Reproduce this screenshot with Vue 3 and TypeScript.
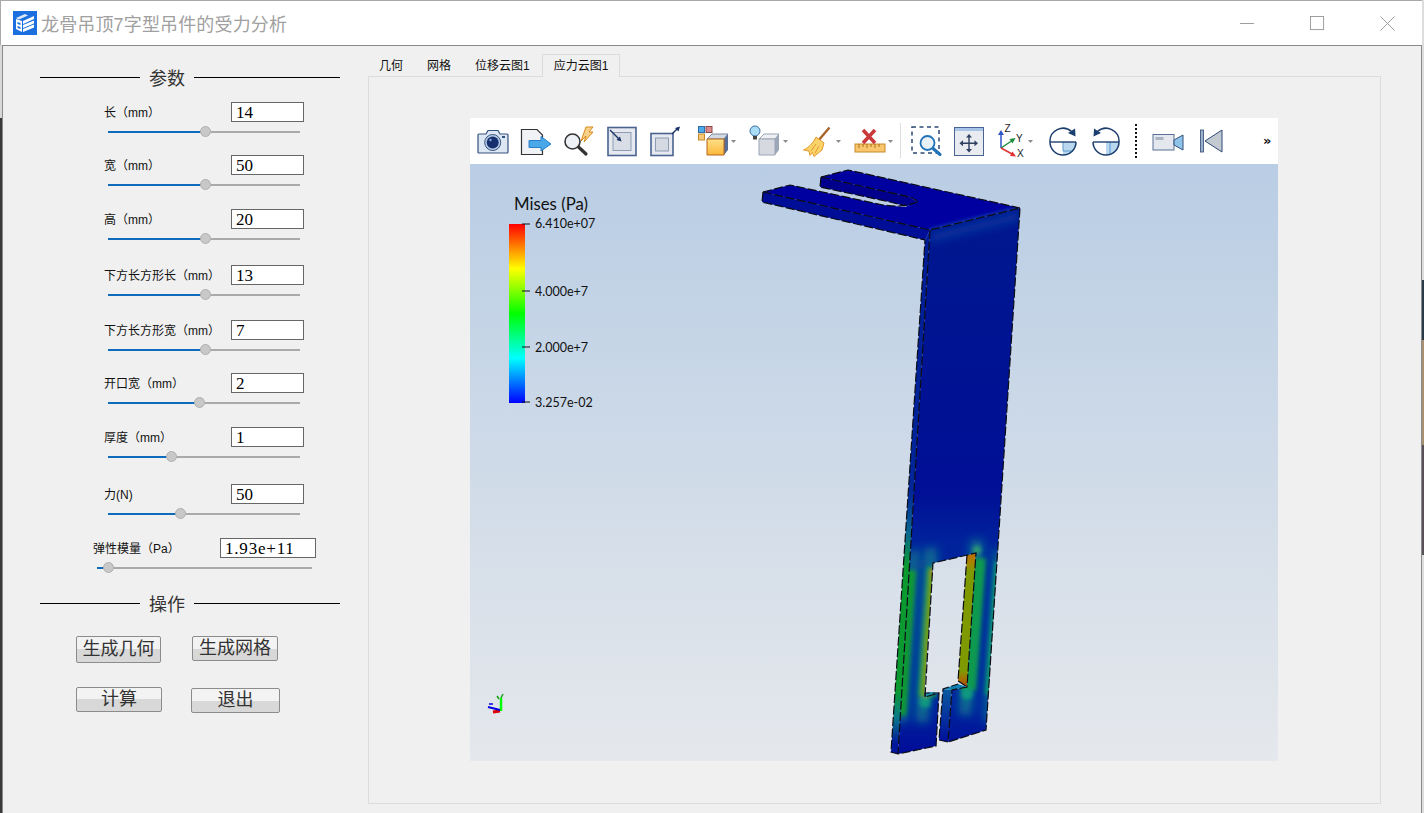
<template>
  <div class="window">
    <header class="titlebar">
      <svg class="logo" viewBox="0 0 24 24">
        <rect width="24" height="24" fill="#1b6fdf" />
        <path d="M3 7 L12 3 L15 4.5 L6 8.5 Z" fill="#dbe9fb" />
        <path d="M3 8 L9 10 L9 21 L3 18 Z" fill="#fff" />
        <path d="M10 10 L21 5 L21 8 L10 13 Z M10 14 L21 9.5 L21 12.5 L10 17 Z M10 18 L21 13.5 L21 16.5 L10 21 Z" fill="#fff" />
        <path d="M4.5 11 L7.5 12 L7.5 14 L4.5 13 Z M4.5 15 L7.5 16 L7.5 18 L4.5 17 Z" fill="#1b6fdf" />
      </svg>
      <span class="title">龙骨吊顶7字型吊件的受力分析</span>
      <div class="controls">
        <svg viewBox="0 0 16 16"><path d="M0 8H15" /></svg>
        <svg viewBox="0 0 16 16"><rect x="0.5" y="0.5" width="14" height="14" /></svg>
        <svg viewBox="0 0 16 16"><path d="M0.5 0.5L15.5 15.5M15.5 0.5L0.5 15.5" /></svg>
      </div>
    </header>

    <main class="body">
      <aside class="side">
        <div class="section">
          <i class="line first"></i><span>参数</span><i class="line"></i>
        </div>

        <div class="params">
          <div
            v-for="p in params"
            :key="p.label"
            class="param"
            :class="{ wide: p.wide }"
            :style="{ height: p.height + 'px' }"
          >
            <div class="param-top">
              <label>{{ p.label }}</label>
              <input :value="p.value" readonly />
            </div>
            <div class="slider">
              <div class="fill" :style="{ width: p.percent + '%' }"></div>
              <div class="thumb" :style="{ left: p.percent + '%' }"></div>
            </div>
          </div>
        </div>

        <div class="section">
          <i class="line first"></i><span>操作</span><i class="line"></i>
        </div>

        <div class="btn-row one">
          <button class="b-geo">生成几何</button>
          <button class="b-mesh">生成网格</button>
        </div>
        <div class="btn-row two">
          <button class="b-calc">计算</button>
          <button class="b-exit">退出</button>
        </div>
      </aside>

      <section class="tabs">
        <nav class="tabbar">
          <span
            v-for="t in tabs"
            :key="t"
            class="tab"
            :class="{ active: t === activeTab }"
          >{{ t }}</span>
        </nav>

        <div class="pane">
          <div class="viewer">
            <div class="toolbar">
              <div class="group plain">
                <svg class="ico" viewBox="0 0 32 32">
                  <path d="M2 9H9L11 5.500H21L23 9H30Q31 9 31 10V27Q31 28 30 28H2Q1 28 1 27V10Q1 9 2 9Z" fill="#dde6f3" stroke="#34527f" stroke-width="1.200" />
                  <circle cx="15.700" cy="17.500" r="8" fill="#b9cbe6" stroke="#34527f" />
                  <circle cx="15.700" cy="17.500" r="6" fill="#16306f" />
                  <circle cx="13.500" cy="15" r="1.200" fill="#8fa9d6" />
                  <rect x="25" y="11" width="3" height="2" fill="#34527f" />
                </svg>
                <svg class="ico" viewBox="0 0 32 32">
                  <path d="M1.500 4.500H17L22.500 10V29.500H1.500Z" fill="#f0f2f5" stroke="#333" stroke-width="1.200" />
                  <path d="M9 15.500H21V11.500L31 19L21 26V22.500H9Z" fill="#4aa8e8" stroke="#2a7fc8" />
                </svg>
                <svg class="ico" viewBox="0 0 32 32">
                  <path d="M18 16L23 2H30L26 7H30L21 17L23 11Z" fill="#f7d08a" stroke="#d98a1a" />
                  <path d="M15.500 22L23 29" stroke="#333" stroke-width="3.200" stroke-linecap="round" />
                  <circle cx="9.500" cy="16.500" r="7.500" fill="#eef2f7" stroke="#333" stroke-width="1.600" />
                </svg>
                <svg class="ico" viewBox="0 0 32 32">
                  <rect x="2" y="2.500" width="28" height="28" fill="#e6eaf0" stroke="#4a6390" stroke-width="1.600" />
                  <rect x="7" y="7.500" width="18" height="18" fill="#d9dee6" stroke="#8d9bb3" />
                  <path d="M4 5L14 15" stroke="#1c3468" stroke-width="1.400" />
                  <path d="M15.500 16.500L10.500 15L14 11.500Z" fill="#1c3468" />
                </svg>
                <svg class="ico" viewBox="0 0 32 32">
                  <rect x="2" y="8.500" width="22" height="22" fill="#e6eaf0" stroke="#4a6390" stroke-width="1.600" />
                  <rect x="6.500" y="13" width="13" height="13" fill="#d4d9e2" stroke="#8d9bb3" />
                  <path d="M23 9L28 4" stroke="#1c3468" stroke-width="1.400" />
                  <path d="M31 1.500L29.500 6.500L26 3Z" fill="#1c3468" />
                </svg>
              </div>

              <div class="group drops">
                <svg class="ico drop" viewBox="0 0 40 32">
                  <rect x="1.500" y="1.500" width="6" height="6" fill="#4fa8e8" stroke="#2d6fa8" />
                  <rect x="9" y="1.500" width="6" height="6" fill="#d98a8a" stroke="#8a4a4a" />
                  <rect x="1.500" y="9" width="6" height="6" fill="#f5c878" stroke="#c88a2a" />
                  <path d="M10 14L15 9H31L27 14Z" fill="#d4d9e2" stroke="#7a8aa0" />
                  <path d="M27 14L31 9V25L27 30Z" fill="#5a6f95" />
                  <path d="M10 14H27V30H10Z" fill="url(#amber)" stroke="#b5651d" />
                  <path class="caret" d="M34 15H39L36.500 18Z" />
                </svg>
                <svg class="ico drop" viewBox="0 0 40 32">
                  <path d="M10 14L15 9H30L26 14Z" fill="#eef0f3" stroke="#9aa5b5" />
                  <path d="M26 14L30 9V25L26 30Z" fill="#9ba7b8" />
                  <path d="M10 14H26V30H10Z" fill="#d6dae0" stroke="#9aa5b5" />
                  <circle cx="6" cy="6" r="5" fill="#a9dcf7" stroke="#3d6fa8" />
                  <rect x="4" y="11" width="4" height="3.500" fill="#444" />
                  <path class="caret" d="M34 15H39L36.500 18Z" />
                </svg>
                <svg class="ico drop" viewBox="0 0 40 32">
                  <path d="M28.500 2.500L17 16" stroke="#a8642a" stroke-width="2.400" />
                  <path d="M15 12L23 18L21 25L13 31.500L11.500 27.500L9 30.500L8 26L2.500 25Q11 21 15 12Z" fill="#fbd36b" stroke="#e49a2a" />
                  <path d="M15 19L10 26M18 21L14 28" stroke="#e49a2a" />
                  <path class="caret" d="M35 15H40L37.500 18Z" />
                </svg>
                <svg class="ico drop" viewBox="0 0 40 32">
                  <rect x="2" y="19" width="30" height="8" fill="#f7c66d" stroke="#c88a2a" />
                  <path d="M6 19V23M10 19V22M14 19V23M18 19V22M22 19V23M26 19V22" stroke="#a8701a" />
                  <path d="M10 5L22 18M22 5L10 18" stroke="#c9383a" stroke-width="3.500" />
                  <path class="caret" d="M35 15H40L37.500 18Z" />
                </svg>
              </div>

              <i class="sep"></i>

              <div class="group nav">
                <svg class="ico" viewBox="0 0 32 32">
                  <rect x="2" y="2" width="27" height="26" fill="none" stroke="#2d4a78" stroke-width="1.500" stroke-dasharray="4 3.500" />
                  <path d="M22.500 23L30 29.500" stroke="#2272b8" stroke-width="3" stroke-linecap="round" />
                  <circle cx="17.500" cy="18" r="7" fill="#e9f1f9" stroke="#2272b8" stroke-width="1.800" />
                </svg>
                <svg class="ico" viewBox="0 0 32 32">
                  <rect x="1.500" y="2.500" width="29" height="28" fill="#e8ebf0" stroke="#4a6390" />
                  <rect x="2" y="3" width="28" height="3" fill="#a8c4e8" />
                  <path d="M16 11V25.500M8.500 18.300H23" stroke="#2d4060" stroke-width="1.400" />
                  <path d="M16 9L13 12.500H19ZM16 27.500L13 24H19ZM6.500 18.300L10 15.300V21.300ZM25 18.300L21.500 15.300V21.300Z" fill="#2d4060" />
                </svg>
                <svg class="ico axes" viewBox="0 -3 40 38">
                  <path d="M5 23V8" stroke="#2d55c8" stroke-width="1.500" />
                  <path d="M5 5L2 10H8Z" fill="#2d55c8" />
                  <path d="M5 23L17 15" stroke="#1e8f3e" stroke-width="1.500" />
                  <path d="M19.500 13L13.500 14L16.500 18.500Z" fill="#1e8f3e" />
                  <path d="M5 23L17 29.500" stroke="#e03030" stroke-width="1.500" />
                  <path d="M20 31.500L14 31L16.500 26.500Z" fill="#e03030" />
                  <text x="8.500" y="7">Z</text>
                  <text x="20" y="17">Y</text>
                  <text x="21" y="31.500">X</text>
                  <path class="caret" d="M32 15H37L34.500 18Z" />
                </svg>
                <svg class="ico" viewBox="0 0 32 32">
                  <path d="M16 17H29A13 13 0 0 1 16 30Z" fill="#b9d8f0" />
                  <path d="M16 17V26H26" fill="none" stroke="#5a9ad0" />
                  <path d="M3 17H29" stroke="#1c3e6e" stroke-width="1.400" />
                  <path d="M24.500 6.500A13 13 0 0 0 3 17A13 13 0 0 0 29 17" fill="none" stroke="#1c3e6e" stroke-width="1.500" />
                  <path d="M28.500 11.500L28 3.500L21 8Z" fill="#1c3e6e" />
                </svg>
                <svg class="ico" viewBox="0 0 32 32">
                  <path d="M16 17H29A13 13 0 0 1 16 30Z" fill="#b9d8f0" />
                  <path d="M20 17V30" fill="none" stroke="#5a9ad0" />
                  <path d="M3 17H29" stroke="#1c3e6e" stroke-width="1.400" />
                  <path d="M7.500 6.500A13 13 0 0 1 29 17A13 13 0 0 1 3 17" fill="none" stroke="#1c3e6e" stroke-width="1.500" />
                  <path d="M3.500 11.500L4 3.500L11 8Z" fill="#1c3e6e" />
                </svg>
              </div>

              <i class="dots"></i>

              <svg class="ico video" viewBox="0 0 32 32">
                <rect x="1" y="9.500" width="21" height="15.500" fill="#e4e8ee" stroke="#5a6f95" />
                <rect x="3.500" y="12" width="8" height="3" fill="#aab4c2" />
                <path d="M22 15L31 10V25L22 20Z" fill="#8fc4ea" stroke="#35507a" />
              </svg>
              <svg class="ico tri" viewBox="0 0 32 32">
                <rect x="5.500" y="5" width="3" height="22" fill="#9db0c8" stroke="#2d4a78" stroke-width="0.800" />
                <path d="M10 16L27 5V27Z" fill="#c3c9d1" stroke="#2d4a78" />
              </svg>
              <span class="more">»</span>
            </div>

            <div class="viewport">
              <svg class="scene" viewBox="470 164 808 597">
                <defs>
                  <linearGradient id="amber" x1="0" y1="0" x2="0" y2="1">
                    <stop offset="0" stop-color="#ffe08a" />
                    <stop offset="1" stop-color="#fdb83a" />
                  </linearGradient>
                  <linearGradient id="scale" x1="0" y1="0" x2="0" y2="1">
                    <stop offset="0" stop-color="#ff0000" />
                    <stop offset="0.25" stop-color="#ffff00" />
                    <stop offset="0.5" stop-color="#00ff00" />
                    <stop offset="0.75" stop-color="#00ffff" />
                    <stop offset="1" stop-color="#0000ff" />
                  </linearGradient>
                  <linearGradient id="faceFill" gradientUnits="userSpaceOnUse" x1="0" y1="230" x2="0" y2="754">
                    <stop offset="0" stop-color="#00178f" />
                    <stop offset="0.5" stop-color="#000f96" />
                    <stop offset="0.6" stop-color="#00239c" />
                    <stop offset="0.9" stop-color="#00259e" />
                    <stop offset="1" stop-color="#000c98" />
                  </linearGradient>
                  <linearGradient id="stripFill" gradientUnits="userSpaceOnUse" x1="0" y1="230" x2="0" y2="754">
                    <stop offset="0" stop-color="#001c96" />
                    <stop offset="0.5" stop-color="#00269a" />
                    <stop offset="0.58" stop-color="#0a6a90" />
                    <stop offset="0.64" stop-color="#0a9a30" />
                    <stop offset="0.88" stop-color="#0a9a30" />
                    <stop offset="0.93" stop-color="#0a7a8a" />
                    <stop offset="0.98" stop-color="#00189c" />
                  </linearGradient>
                  <linearGradient id="wallFill" gradientUnits="userSpaceOnUse" x1="0" y1="553" x2="0" y2="687">
                    <stop offset="0" stop-color="#c06a00" />
                    <stop offset="0.07" stop-color="#a88400" />
                    <stop offset="0.14" stop-color="#7f9a00" />
                    <stop offset="0.88" stop-color="#7f9a00" />
                    <stop offset="0.95" stop-color="#a86a00" />
                    <stop offset="1" stop-color="#a04a10" />
                  </linearGradient>
                  <linearGradient id="legFill" gradientUnits="userSpaceOnUse" x1="0" y1="689" x2="0" y2="742">
                    <stop offset="0" stop-color="#0a5aa0" />
                    <stop offset="1" stop-color="#000f9c" />
                  </linearGradient>
                  <clipPath id="faceClip">
                    <polygon :points="facePoints" />
                  </clipPath>
                  <clipPath id="topClip">
                    <polygon :points="topPoints" />
                  </clipPath>
                  <filter id="soft" filterUnits="userSpaceOnUse" x="470" y="164" width="808" height="597">
                    <feGaussianBlur stdDeviation="2" />
                  </filter>
                  <filter id="softer" filterUnits="userSpaceOnUse" x="470" y="164" width="808" height="597">
                    <feGaussianBlur stdDeviation="5" />
                  </filter>
                </defs>

                <!-- bracket -->
                <path d="M821 177L910 197L917 202Q911 206 905 206L890 202L820 187Z" fill="#00008c" />
                <polygon :points="topPoints" fill="#0000a0" />
                <g clip-path="url(#topClip)">
                  <path d="M930 232L1020 210" stroke="#1a5ab0" stroke-width="5" filter="url(#soft)" />
                </g>
                <polygon points="763,192 930,230 925,240 762,202" fill="#000d96" />
                <polygon points="925,240 930,230 898,754 891,752" fill="url(#stripFill)" />
                <polygon points="967,555 976,553 967,687 958,681" fill="url(#wallFill)" />
                <polygon points="939,740 943,689 952,690 948,742" fill="url(#legFill)" />
                <polygon points="943,689 958,684 967,687 952,690" fill="#1080b0" />
                <polygon points="925,693 931,692 939,693 925,697" fill="#1a90b0" />
                <polygon :points="facePoints" fill="url(#faceFill)" />

                <g clip-path="url(#faceClip)">
                  <g filter="url(#softer)">
                    <path d="M930 238L1020 216" stroke="#0c3aa0" stroke-width="7" />
                    <path d="M914 550L902 722" stroke="#0a6f90" stroke-width="10" />
                    <path d="M998 550L988 722" stroke="#0a6f90" stroke-width="8" />
                    <path d="M931 548L922 722" stroke="#0a6f90" stroke-width="12" />
                    <path d="M977 540L965 715" stroke="#0a6f90" stroke-width="12" />
                  </g>
                  <g filter="url(#soft)">
                    <path d="M909 570L899 715" stroke="#0c9a30" stroke-width="14" />
                    <path d="M936 567L927 697" stroke="#0b9a50" stroke-width="18" />
                    <path d="M933 570L925 697" stroke="#7a9c00" stroke-width="7" />
                    <path d="M978 558L968 690" stroke="#0b9a50" stroke-width="16" />
                    <path d="M999 562L989 695" stroke="#0a9a70" stroke-width="8" />
                    <circle cx="934" cy="572" r="3" fill="#c07a00" />
                    <circle cx="977" cy="550" r="4" fill="#30a070" />
                    <circle cx="925" cy="702" r="6" fill="#0a9a80" />
                    <circle cx="967" cy="694" r="6" fill="#0a9a80" />
                  </g>
                </g>

                <g class="edges">
                  <path d="M763 192L930 230L1020 208L986 730L948 742" />
                  <path d="M821 177L910 197Q918 200 917 202" />
                  <path d="M821 177L848 170L1020 208" />
                  <path d="M763 192L790 185L883 205Q905 208 917 202" />
                  <path d="M821 177L820 187L890 202L905 206" />
                  <path d="M763 192L762 202L925 240L891 752L898 754L936 746L939 693L925 697L933 563L976 553L967 687L952 690L948 742L939 740L943 689L958 684" />
                  <path d="M930 230L898 754" />
                  <path d="M967 555L958 681L967 687" />
                  <path d="M925 697L925 693L939 693" />
                </g>

                <!-- scalar bar -->
                <rect x="509" y="224" width="16" height="179" fill="url(#scale)" />
                <path d="M522 224H530M522 291H530M522 347H530M522 402H530" stroke="#111" stroke-width="1.200" />
                <text class="bar-title" x="514" y="210">Mises (Pa)</text>
                <text class="bar-label" x="535" y="228">6.410e+07</text>
                <text class="bar-label" x="535" y="296">4.000e+7</text>
                <text class="bar-label" x="535" y="352">2.000e+7</text>
                <text class="bar-label" x="535" y="407">3.257e-02</text>

                <!-- orientation triad -->
                <path d="M501 711V698" stroke="#00ff00" stroke-width="2.500" />
                <path d="M501 698L503 694M499 699L497 696" stroke="#18a018" stroke-width="1.500" />
                <path d="M500 711L493 712" stroke="#e00000" stroke-width="3" />
                <path d="M500 710L488 707" stroke="#0000e0" stroke-width="2" />
                <path d="M489 704H493" stroke="#0000e0" stroke-width="1.500" />
              </svg>
            </div>
          </div>
        </div>
      </section>
    </main>
  </div>
</template>

<script setup lang="ts">
import { ref } from "vue";

interface Param {
  label: string;
  value: string;
  percent: number;
  height: number;
  wide?: boolean;
}

const params: Param[] = [
  { label: "长（mm）", value: "14", percent: 50.5, height: 53 },
  { label: "宽（mm）", value: "50", percent: 50.5, height: 54 },
  { label: "高（mm）", value: "20", percent: 50.5, height: 56 },
  { label: "下方长方形长（mm）", value: "13", percent: 50.5, height: 55 },
  { label: "下方长方形宽（mm）", value: "7", percent: 50.5, height: 53 },
  { label: "开口宽（mm）", value: "2", percent: 47.5, height: 54 },
  { label: "厚度（mm）", value: "1", percent: 33, height: 57 },
  { label: "力(N)", value: "50", percent: 37.5, height: 54 },
  { label: "弹性模量（Pa）", value: "1.93e+11", percent: 5, height: 55, wide: true },
];

const tabs = ["几何", "网格", "位移云图1", "应力云图1"];
const activeTab = ref("应力云图1");

const topPoints =
  "821,177 848,170 1020,208 930,230 763,192 790,185 883,205 905,207 917,202 910,197";
const facePoints =
  "930,230 1020,208 986,730 948,742 952,690 967,687 976,553 933,563 924,697 939,693 936,746 898,754";
</script>

<style>
html,
body {
  margin: 0;
  background: #fff;
}
</style>

<style scoped>
.window {
  width: 1424px;
  height: 813px;
  display: flex;
  flex-direction: column;
  overflow: hidden;
  box-sizing: border-box;
  padding-right: 2px;
  background:
    linear-gradient(#ddd 280px, #2a3a48 280px 340px, #a89070 340px 445px, #5a5058 445px 555px, #ddd 555px) right / 2px 100% no-repeat,
    linear-gradient(#d8d8d8 118px, #3a3a3a 118px) left / 2px 100% no-repeat;
  font-family: "Liberation Sans", "Noto Sans CJK SC", sans-serif;
}

.titlebar {
  height: 45px;
  flex: none;
  box-sizing: border-box;
  display: flex;
  align-items: center;
  padding-left: 12px;
  background: #fff;
  border-top: 1px solid #aaa;
  border-left: 1px solid #aaa;
}
.logo {
  width: 24px;
  height: 24px;
}
.title {
  margin-left: 4px;
  font-size: 18px;
  letter-spacing: 0.15px;
  color: #a0a0a0;
}
.controls {
  margin-left: auto;
  display: flex;
  gap: 55px;
  padding-right: 27px;
}
.controls svg {
  width: 15px;
  height: 15px;
  overflow: visible;
}
.controls path,
.controls rect {
  fill: none;
  stroke: #999;
  stroke-width: 1;
}

.body {
  flex: 1;
  display: flex;
  margin-left: 2px;
  background: #f0f0f0;
  border-top: 1px solid #8a8a8a;
  border-left: 1px solid #8a8a8a;
  border-right: 1px solid #8a8a8a;
  min-height: 0;
}

.side {
  width: 365px;
  flex: none;
  box-sizing: border-box;
  padding-top: 21px;
}
.section {
  width: 300px;
  height: 20px;
  margin-left: 37px;
  display: flex;
  align-items: center;
  font-size: 18px;
  color: #333;
}
.section span {
  margin: 4px 9px 0 9px;
  line-height: 20px;
}
.line {
  flex: 1;
  height: 1px;
  background: #000;
}
.line.first {
  flex: none;
  width: 100px;
}
.params {
  margin-top: 15px;
}
.param-top {
  display: flex;
  align-items: center;
  justify-content: space-between;
  width: 200px;
  margin-left: 101px;
  height: 20px;
}
.param-top label {
  font-size: 12px;
  margin-top: -2px;
  color: #111;
  white-space: nowrap;
}
.param-top input {
  width: 73px;
  height: 20px;
  box-sizing: border-box;
  border: 1px solid #666;
  background: #fff;
  padding: 1px 0 0 4px;
  margin: 0;
  outline: none;
  border-radius: 0;
  font-family: "Liberation Serif", serif;
  font-size: 17px;
  color: #000;
}
.slider {
  position: relative;
  width: 192px;
  height: 2px;
  margin: 9px 0 0 105px;
  background: #aaa;
}
.fill {
  height: 2px;
  background: #0f6cbd;
}
.thumb {
  position: absolute;
  top: -5px;
  width: 11px;
  height: 11px;
  margin-left: -5px;
  box-sizing: border-box;
  border-radius: 50%;
  background: #c8c8c8;
  border: 1px solid #b0b0b0;
}

.wide .param-top {
  width: 223px;
  margin-left: 90px;
}
.wide .param-top input {
  width: 96px;
  letter-spacing: 0.8px;
}
.wide .slider {
  width: 215px;
  margin-left: 94px;
}

.btn-row {
  display: flex;
  align-items: flex-start;
  margin-left: 73px;
}
.btn-row.one {
  margin-top: 23px;
  gap: 31px;
}
.btn-row.two {
  margin-top: 24px;
  gap: 29px;
}
.btn-row button {
  padding: 0 0 2px;
  margin: 0;
  box-sizing: border-box;
  border: 1px solid #8c8c8c;
  border-radius: 2px;
  background: linear-gradient(#f3f3f3 50%, #d8d8d8 50%);
  font-family: inherit;
  font-size: 18px;
  line-height: 1;
  color: #333;
}
.b-geo {
  width: 85px;
  height: 27px;
}
.b-mesh {
  width: 86px;
  height: 25px;
}
.b-calc {
  width: 86px;
  height: 25px;
}
.btn-row .b-exit {
  width: 89px;
  height: 25px;
  margin-top: 1px;
}

.tabs {
  flex: 1;
  display: flex;
  flex-direction: column;
  min-width: 0;
  padding-top: 8px;
}
.tabbar {
  display: flex;
  height: 22px;
  margin-left: -1px;
  position: relative;
  z-index: 1;
}
.tab {
  padding: 0 12px;
  line-height: 24px;
  font-size: 12px;
  color: #111;
  white-space: nowrap;
}
.tab.active {
  box-sizing: border-box;
  height: 23px;
  padding: 0 11px;
  border: 1px solid #dcdcdc;
  border-bottom: none;
  background: #f0f0f0;
  line-height: 22px;
}
.pane {
  width: 1013px;
  height: 728px;
  box-sizing: border-box;
  border: 1px solid #dcdcdc;
  padding: 0 2px 2px 0;
  display: flex;
  align-items: center;
  justify-content: center;
}
.viewer {
  width: 808px;
  height: 643px;
  display: flex;
  flex-direction: column;
}

.toolbar {
  height: 46px;
  flex: none;
  display: flex;
  align-items: center;
  position: relative;
  background: #fff;
  padding-left: 7px;
}
.group {
  display: flex;
  align-items: center;
}
.ico {
  width: 32px;
  height: 32px;
  flex: none;
}
.ico.drop {
  width: 40px;
}
.ico.axes {
  width: 40px;
  height: 38px;
}
.caret {
  fill: #8a8a8a;
}
.plain {
  gap: 11px;
}
.drops {
  gap: 12px;
  margin-left: 16px;
}
.sep {
  width: 1px;
  height: 35px;
  margin-left: 7px;
  background: #ddd;
}
.nav {
  gap: 11px;
  margin-left: 9px;
}
.axes text {
  font-family: "Liberation Sans", sans-serif;
  font-size: 10px;
  fill: #222;
}
.dots {
  width: 0;
  height: 34px;
  margin-left: 13px;
  border-left: 2px dotted #111;
}
.video {
  margin-left: 15px;
}
.tri {
  margin-left: 11px;
}
.more {
  margin-left: auto;
  margin-right: 6px;
  font-family: "DejaVu Sans", sans-serif;
  font-size: 13px;
  font-weight: bold;
  color: #111;
}

.viewport {
  flex: 1;
  min-height: 0;
  background: linear-gradient(#b9cde4, #e5e8ec);
}
.scene {
  display: block;
  width: 808px;
  height: 597px;
}
.edges path {
  fill: none;
  stroke: #0c0c14;
  stroke-width: 1.200;
  stroke-dasharray: 9 2.500;
}
.bar-title {
  font-family: Lato, sans-serif;
  font-size: 16.800px;
  fill: #111;
}
.bar-label {
  font-family: Lato, sans-serif;
  font-size: 12.500px;
  fill: #111;
}
</style>
